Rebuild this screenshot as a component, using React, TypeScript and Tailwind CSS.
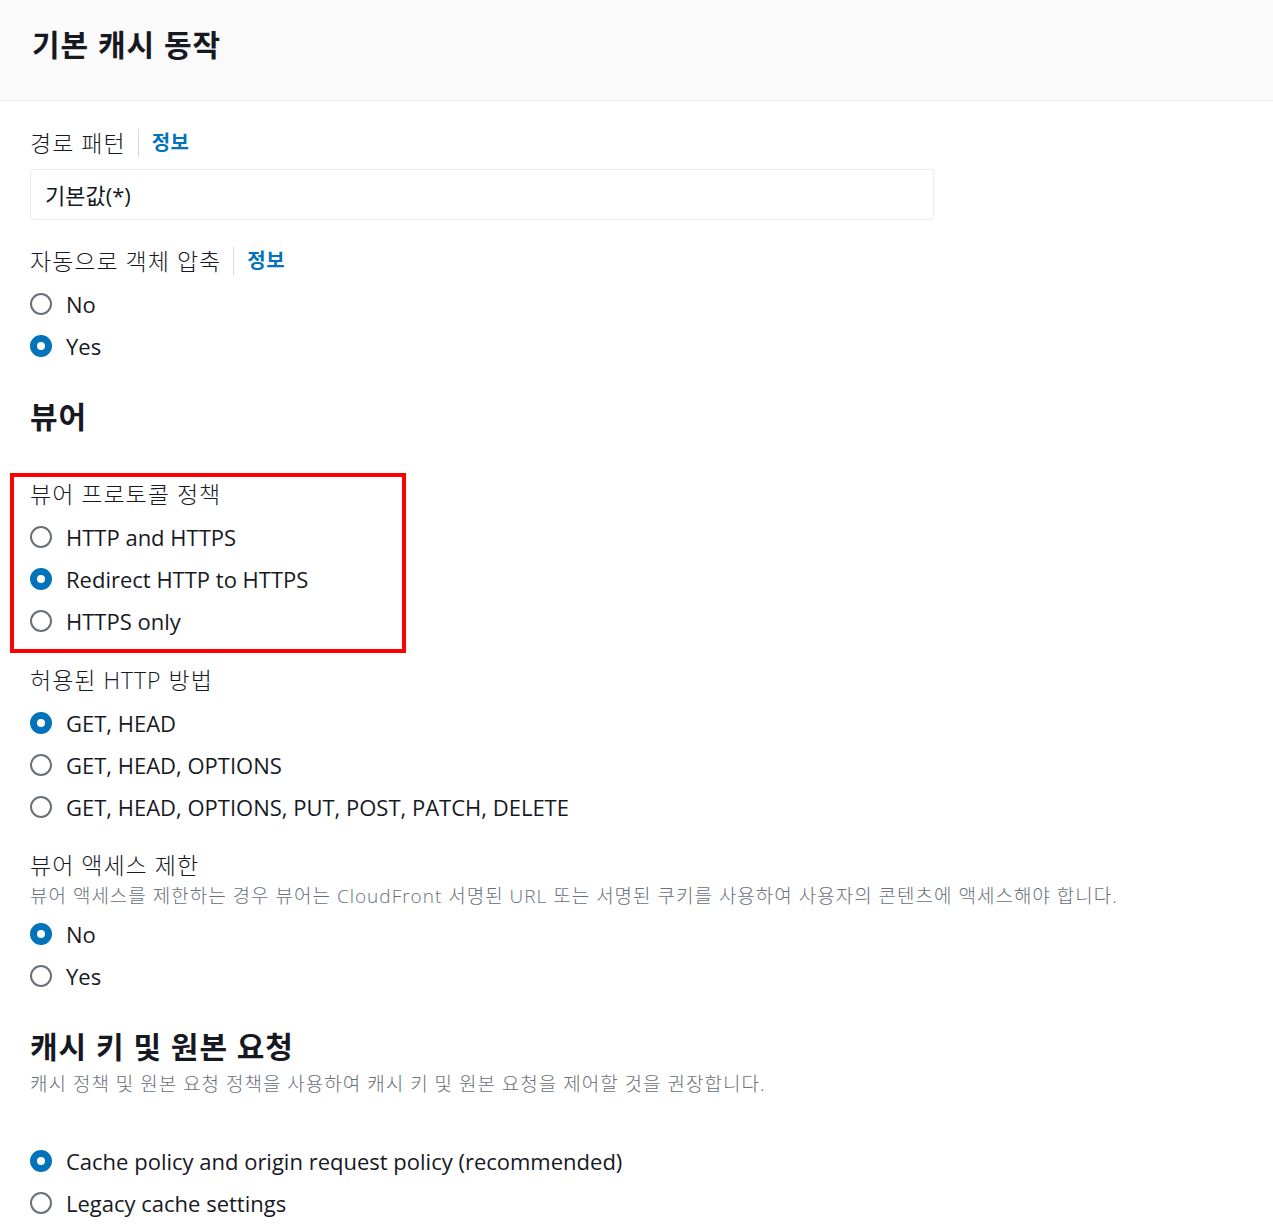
import React from 'react';

const font = { fontFamily: '"Open Sans", "Noto Sans CJK KR", sans-serif' };

const Radio: React.FC<{ label: string; checked?: boolean }> = ({ label, checked }) => (
  <div className="flex h-[42px] items-center">
    {checked ? (
      <span className="box-border h-[22px] w-[22px] rounded-full border-[7px] border-[#0073bb] bg-white" />
    ) : (
      <span className="box-border h-[22px] w-[22px] rounded-full border-2 border-[#687078] bg-white" />
    )}
    <span className="ml-[14px] text-[22px] leading-none text-[#16191f]">{label}</span>
  </div>
);

const Label: React.FC<{ text: string; info?: boolean; className?: string }> = ({ text, info, className }) => (
  <div className={`flex h-[30px] items-center ${className ?? ''}`}>
    <span className="text-[23px] font-light leading-none tracking-[1px] text-[#16191f]">{text}</span>
    {info && (
      <>
        <span className="ml-[12px] h-[28px] w-px bg-[#d5dbdb]" />
        <span className="ml-[13px] text-[20px] font-bold leading-none tracking-[0.5px] text-[#0073bb]">정보</span>
      </>
    )}
  </div>
);

const Heading: React.FC<{ text: string; className?: string }> = ({ text, className }) => (
  <div className={`flex h-[40px] items-center ${className ?? ''}`}>
    <h2 className="text-[30px] font-bold leading-none tracking-[1px] text-[#16191f]">{text}</h2>
  </div>
);

const Desc: React.FC<{ text: string; className?: string }> = ({ text, className }) => (
  <div className={`flex h-[26px] items-center ${className ?? ''}`}>
    <p className="whitespace-nowrap text-[19px] font-light leading-none tracking-[1px] text-[#687078]">{text}</p>
  </div>
);

export default function App() {
  return (
    <div className="min-h-[1225px] w-full bg-white" style={font}>
      <div className="flex h-[101px] items-center border-b border-[#eaeded] bg-[#fafafa] px-[32px] pb-[10px]">
        <h1 className="text-[30px] font-bold leading-none tracking-[1px] text-[#16191f]">기본 캐시 동작</h1>
      </div>

      <div className="flex flex-col px-[30px]">
        <Label text="경로 패턴" info className="mt-[27px]" />
        <div className="mt-[11px] flex h-[51px] w-[904px] items-center rounded-[3px] border border-[#eaeded] px-[14px]">
          <span className="text-[22px] leading-none text-[#16191f]">기본값(*)</span>
        </div>

        <Label text="자동으로 객체 압축" info className="mt-[26px]" />
        <div className="mt-[7px] flex flex-col">
          <Radio label="No" />
          <Radio label="Yes" checked />
        </div>

        <Heading text="뷰어" className="mt-[30px]" />

        <div className="-ml-[20px] mt-[36px] flex w-[396px] flex-col border-4 border-[#ff0000] pb-[7px] pl-[16px] pt-[2px]">
          <Label text="뷰어 프로토콜 정책" />
          <div className="mt-[7px] flex flex-col">
            <Radio label="HTTP and HTTPS" />
            <Radio label="Redirect HTTP to HTTPS" checked />
            <Radio label="HTTPS only" />
          </div>
        </div>

        <Label text="허용된 HTTP 방법" className="mt-[12px]" />
        <div className="mt-[7px] flex flex-col">
          <Radio label="GET, HEAD" checked />
          <Radio label="GET, HEAD, OPTIONS" />
          <Radio label="GET, HEAD, OPTIONS, PUT, POST, PATCH, DELETE" />
        </div>

        <Label text="뷰어 액세스 제한" className="mt-[22px]" />
        <Desc
          text="뷰어 액세스를 제한하는 경우 뷰어는 CloudFront 서명된 URL 또는 서명된 쿠키를 사용하여 사용자의 콘텐츠에 액세스해야 합니다."
          className="mt-[3px]"
        />
        <div className="mt-[4px] flex flex-col">
          <Radio label="No" checked />
          <Radio label="Yes" />
        </div>

        <Heading text="캐시 키 및 원본 요청" className="mt-[30px]" />
        <Desc text="캐시 정책 및 원본 요청 정책을 사용하여 캐시 키 및 원본 요청을 제어할 것을 권장합니다." className="mt-[4px]" />
        <div className="mt-[43px] flex flex-col">
          <Radio label="Cache policy and origin request policy (recommended)" checked />
          <Radio label="Legacy cache settings" />
        </div>
      </div>
    </div>
  );
}
